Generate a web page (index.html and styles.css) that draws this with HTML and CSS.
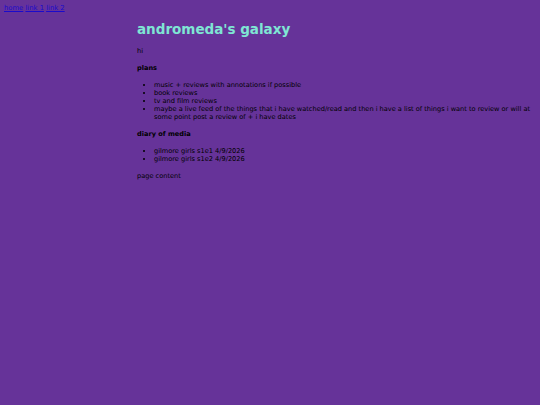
FILE: index.html
```html
<!DOCTYPE html>
<html>
<head>
<meta charset="utf-8">
<link rel="stylesheet" href="styles.css">
</head>
<body>
<nav class="nav"><a href="#">home</a> <a href="#">link 1</a> <a href="#">link 2</a></nav>
<main class="content">
<h1 class="title">andromeda's galaxy</h1>
<p class="text">hi</p>
<h4 class="section">plans</h4>
<ul class="list">
<li>music + reviews with annotations if possible</li>
<li>book reviews</li>
<li>tv and film reviews</li>
<li>maybe a live feed of the things that i have watched/read and then i have a list of things i want to review or will at some point post a review of + i have dates</li>
</ul>
<h4 class="section">diary of media</h4>
<ul class="list">
<li>gilmore girls s1e1 4/9/2026</li>
<li>gilmore girls s1e2 4/9/2026</li>
</ul>
<p class="text">page content</p>
</main>
</body>
</html>
```
FILE: styles.css
```css
html, body {
  background: #663399;
}
body {
  margin: 4px;
  font-family: "DejaVu Sans", Verdana, sans-serif;
  font-size: 6.6px;
  line-height: 8px;
  color: #000;
}
.nav {
  font-size: 6.8px;
  line-height: 9px;
}
.nav a {
  color: #1a0acc;
}
.content {
  margin-left: 25%;
}
.title {
  font-size: 13.5px;
  line-height: 18px;
  color: #7fe6d4;
  margin: 7px 0 9px;
}
.text {
  margin: 9px 0;
}
.section {
  font-size: 6.6px;
  font-weight: bold;
  margin: 9px 0;
}
.list {
  margin: 9px 0;
  padding-left: 17px;
}
```
